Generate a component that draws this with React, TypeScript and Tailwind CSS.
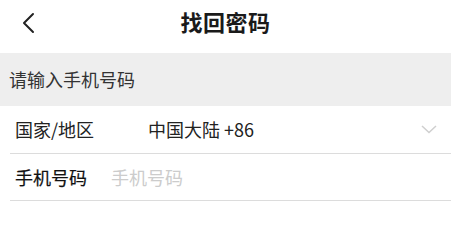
import React from 'react';

const font = { fontFamily: '"Noto Sans CJK SC", "Noto Sans", sans-serif' };

export default function App() {
    return (
        <div className="w-[461px] h-[203px] bg-white overflow-hidden" style={font}>
            <div className="w-[451px]">
                {/* header */}
                <div className="relative h-[42px] flex items-center justify-center">
                    <button className="absolute left-[20px] top-[12px] w-[16px] h-[22px] flex items-center justify-center">
                        <svg width="14" height="22" viewBox="0 0 14 22" fill="none">
                            <path d="M12 2 L3 11 L12 20" stroke="#222" strokeWidth="2" strokeLinecap="round" strokeLinejoin="round" />
                        </svg>
                    </button>
                    <h1 className="text-[22px] leading-none font-bold text-[#1a1a1a] tracking-[0.5px]">找回密码</h1>
                </div>

                {/* tip band */}
                <div className="mt-[11px] h-[53px] bg-[#eeeeee] flex items-center pl-[9px] text-[18px] text-[#333]">
                    请输入手机号码
                </div>

                {/* rows */}
                <div className="ml-[10px]">
                    <div className="h-[48px] border-b border-[#dcdcdc] flex items-center pl-[5px] pr-[14px] text-[18px] text-[#222]">
                        <span className="w-[133px]">国家/地区</span>
                        <span className="flex-1">中国大陆 +86</span>
                        <svg width="16" height="9" viewBox="0 0 16 9" fill="none">
                            <path d="M1 1 L8 7.5 L15 1" stroke="#cfcfcf" strokeWidth="1.5" />
                        </svg>
                    </div>
                    <div className="h-[47px] border-b border-[#dcdcdc] flex items-center pl-[5px] text-[18px]">
                        <span className="w-[96px] text-[#111] [-webkit-text-stroke:0.2px_#111]">手机号码</span>
                        <input
                            className="flex-1 outline-none bg-transparent text-[18px] placeholder:text-[#cccccc]"
                            placeholder="手机号码"
                            style={font}
                        />
                    </div>
                </div>
            </div>
        </div>
    );
}
